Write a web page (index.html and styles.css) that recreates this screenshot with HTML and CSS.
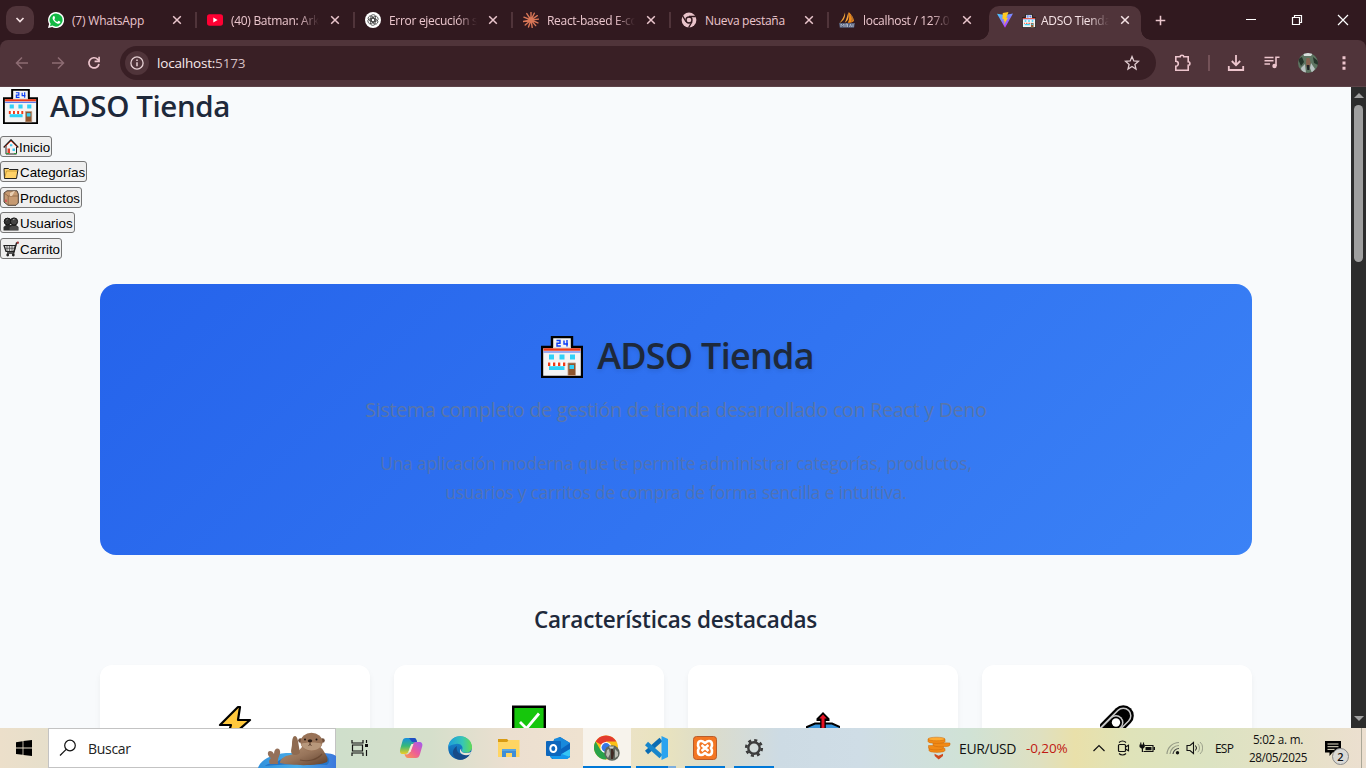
FILE: index.html
```html
<!DOCTYPE html>
<html lang="es">
<head>
<meta charset="utf-8">
<title>ADSO Tienda</title>
<link rel="stylesheet" href="styles.css">
</head>
<body>
<svg class="defs" aria-hidden="true">
  <symbol id="store" viewBox="0 0 42 42">
    <path d="M11 1h20v10h10v30H1V11h10z" fill="#f4f4f4" stroke="#000" stroke-width="2.4"/>
    <path d="M2.500 13.500h37" stroke="#f03a17" stroke-width="2.600"/>
    <path d="M2.500 16h37" stroke="#3f66f0" stroke-width="1.200"/>
    <path d="M12.200 11.700h17.600" stroke="#d8d8d8" stroke-width="1"/>
    <path d="M15.500 4.500h3.500v2.800h-3v2.700h3.800M23 4.500v3.500h4M26 4v6.500" fill="none" stroke="#0a3cf5" stroke-width="1.400"/>
    <path d="M8 18.500h5v5H8zM18.500 18.500h5v5h-5zM29 18.500h5v5h-5zM8 30h15.500v4H8z" fill="#31d2f7"/>
    <path d="M7 28.200h17.500" stroke="#fff" stroke-width="4"/>
    <path d="M7 28.200h17.500" stroke="#f03a17" stroke-width="3.500" stroke-dasharray="2.300 2.700"/>
    <path d="M27 27h7.500v12.500H27z" fill="#8e562e" stroke="#bd9b83" stroke-width=".8"/>
    <path d="M28.500 29h4.500v4h-4.500z" fill="#31d2f7"/>
  </symbol>
  <symbol id="close" viewBox="0 0 10 10"><path d="M1.200 1.200l7.600 7.600M8.800 1.200L1.200 8.800" fill="none" stroke="currentColor" stroke-width="1.500"/></symbol>
</svg>

<div class="screen">
  <header class="tabstrip">
    <button class="tab-search"><svg width="10" height="10" viewBox="0 0 10 10"><path d="M1.500 3L5 6.500 8.500 3" fill="none" stroke="currentColor" stroke-width="1.700"/></svg></button>
    <div class="tabs">
      <div class="tab">
        <svg class="fav" viewBox="0 0 16 16"><path d="M8 0a8 8 0 1 1-3.800 15L0 16l1.100-4A8 8 0 0 1 8 0z" fill="#fff"/><path d="M8 1.400a6.600 6.600 0 1 1-3.500 12.200l-2.500.6.700-2.400A6.600 6.600 0 0 1 8 1.400z" fill="#12b844"/><path d="M5.600 4c-2 1.800-.7 4.200 1.300 6s4.400 2.600 5.400.6c.4-1-.1-1-1.900-1.800L9.300 10C8 9.500 6.800 8.400 6.300 7.200l.8-1.100L6.300 4z" fill="#fff"/></svg>
        <span class="tab-title wide">(7) WhatsApp</span><svg class="x"><use href="#close"/></svg>
      </div>
      <div class="tab">
        <svg class="fav" viewBox="0 0 16 16"><rect y="2.300" width="16" height="11.400" rx="2.600" fill="#ff0033"/><path d="M6.300 5.600v4.800L10.600 8z" fill="#fff"/></svg>
        <span class="tab-title fade">(40) Batman: Ark</span><svg class="x"><use href="#close"/></svg>
      </div>
      <div class="tab">
        <svg class="fav" viewBox="0 0 16 16"><circle cx="8" cy="8" r="8" fill="#fff"/><g fill="none" stroke="#444" stroke-width=".8"><rect x="5.800" y="2.600" width="4.800" height="7.200" rx="2.400"/><rect x="5.800" y="2.600" width="4.800" height="7.200" rx="2.400" transform="rotate(60 8 8)"/><rect x="5.800" y="2.600" width="4.800" height="7.200" rx="2.400" transform="rotate(120 8 8)"/><rect x="5.800" y="2.600" width="4.800" height="7.200" rx="2.400" transform="rotate(180 8 8)"/><rect x="5.800" y="2.600" width="4.800" height="7.200" rx="2.400" transform="rotate(240 8 8)"/><rect x="5.800" y="2.600" width="4.800" height="7.200" rx="2.400" transform="rotate(300 8 8)"/></g></svg>
        <span class="tab-title fade">Error ejecución s</span><svg class="x"><use href="#close"/></svg>
      </div>
      <div class="tab">
        <svg class="fav" viewBox="0 0 16 16"><path d="M8 8V.4M8 8l3.300-6.800M8 8l6.300-4.300M8 8l7.700-.9M8 8l6.900 2.900M8 8l4.700 5.600M8 8l1.200 7.500M8 8l-2.500 7M8 8l-5.800 5M8 8L.3 9.500M8 8L.9 5.200M8 8L3.800 1.600" stroke="#d97757" stroke-width="1.400" stroke-linecap="round"/><circle cx="8" cy="8" r="2.400" fill="#d97757"/></svg>
        <span class="tab-title fade">React-based E-co</span><svg class="x"><use href="#close"/></svg>
      </div>
      <div class="tab">
        <svg class="fav" viewBox="0 0 16 16"><circle cx="8" cy="8" r="7.400" fill="#e9c3ca"/><circle cx="8" cy="8" r="3" fill="#e9c3ca" stroke="#31191f" stroke-width="1.400"/><path d="M8 4.500h6.800M5 9.800L1.600 3.900M11 9.700l-3.400 5.900" stroke="#31191f" stroke-width="1.300"/></svg>
        <span class="tab-title">Nueva pestaña</span><svg class="x"><use href="#close"/></svg>
      </div>
      <div class="tab">
        <svg class="fav" viewBox="0 0 16 16"><path d="M6 .5c.5 4-.5 8-5.500 10.500C3 8 5 4.500 6 .5zM9.500 0c.7 4 .3 8.500-3.700 10.800C7.500 7.500 8 4.500 9.500 0z" fill="#f5a33a"/><path d="M9.800 0c3 3 5 6 5.200 9-1.500 1.300-3.500 1.800-6.300 1.800 2-3 1.500-7 1.100-10.800z" fill="#f28a18"/><path d="M12 3c1.500 2.500 1.600 4.500.5 6.500" stroke="#8c633f" fill="none"/><path d="M0 11h16l-1 4.700H.8z" fill="#56607d"/><path d="M2 15v-3l1.500 1.500L5 12v3M7 15v-3h1.500v3M10.500 15l1-3 1 3M14 12v3" stroke="#b6bccd" stroke-width=".9" fill="none"/></svg>
        <span class="tab-title fade">localhost / 127.0</span><svg class="x"><use href="#close"/></svg>
      </div>
      <div class="tab active">
        <svg class="fav" viewBox="0 0 16 16"><defs><linearGradient id="vite" x1="0" y1="0" x2=".6" y2="1"><stop stop-color="#41d1ff"/><stop offset="1" stop-color="#bd34fe"/></linearGradient></defs><path d="M0 1.700l8 14L16 1.500 8.200 3z" fill="url(#vite)"/><path d="M11.400 0L5.800 1.100 5.400 7.300l1.700-.4-.5 2.400 1.100-.3-.8 4 4.100-7.200-1.700.3z" fill="#ffcb22"/></svg>
        <span class="tab-title fade"><svg class="mini"><use href="#store"/></svg>ADSO Tienda</span><svg class="x"><use href="#close"/></svg>
      </div>
    </div>
    <svg class="plus" viewBox="0 0 12 12"><path d="M6 .8v10.400M.8 6h10.400" stroke="currentColor" stroke-width="1.700"/></svg>
    <div class="win">
      <svg viewBox="0 0 12 12"><path d="M1 5.500h10" stroke="#fff"/></svg>
      <svg viewBox="0 0 12 12"><path d="M1.500 3.500h7v7h-7zM3.500 3.500v-2h7v7h-2" fill="none" stroke="#fff" stroke-width="1.200"/></svg>
      <svg viewBox="0 0 12 12"><path d="M1 1l10 10M11 1L1 11" stroke="#fff" stroke-width="1.200"/></svg>
    </div>
  </header>

  <div class="toolbar">
    <svg class="nav dim" viewBox="0 0 14 14"><path d="M13 7H2M7 1.500L1.500 7 7 12.500" fill="none" stroke="currentColor" stroke-width="1.500"/></svg>
    <svg class="nav dim" viewBox="0 0 14 14"><path d="M1 7h11M7 1.500L12.500 7 7 12.500" fill="none" stroke="currentColor" stroke-width="1.500"/></svg>
    <svg class="nav" viewBox="0 0 14 14"><path d="M12 8a5.100 5.100 0 1 1-1.300-4.700l1.400 1.400" fill="none" stroke="currentColor" stroke-width="1.700"/><path d="M12.900.8v5.400H7.600V4.600h3.700V.8z" fill="currentColor"/></svg>
    <div class="omnibox">
      <span class="info"><svg width="14" height="14" viewBox="0 0 14 14"><circle cx="7" cy="7" r="6.100" fill="none" stroke="#e6d0d4" stroke-width="1.300"/><path d="M7 6.200v4M7 3.500v1.500" stroke="#e6d0d4" stroke-width="1.500"/></svg></span>
      <span class="url">localhost:<em>5173</em></span>
      <svg class="star" viewBox="0 0 16 16"><path d="M8 1.600l1.800 4.300 4.700.4-3.600 3.100 1.100 4.600L8 11.500 4 14l1.100-4.600L1.500 6.300l4.700-.4z" fill="none" stroke="#e0ccd0" stroke-width="1.300"/></svg>
    </div>
    <div class="actions">
      <svg class="a-ext" width="18" height="18" viewBox="0 0 18 18"><path d="M1.800 2.800h4.400a1.800 1.500 0 0 1 3.600 0h4.400v5a1.700 1.700 0 0 1 0 3.400v5H1.800v-4a2.500 2.500 0 0 0 0-5z" fill="none" stroke="currentColor" stroke-width="1.600"/></svg>
      <i class="bar"></i>
      <svg class="a-dl" width="18" height="18" viewBox="0 0 18 18"><path d="M9 1v10M4.800 7L9 11.200 13.200 7M1.800 12v4h14.400v-4" fill="none" stroke="currentColor" stroke-width="1.800"/></svg>
      <svg class="a-media" width="16" height="16" viewBox="0 0 16 16"><path d="M.5 2.500h9M.5 5.700h9M.5 9h5.500M12 11V2.300h3.500" fill="none" stroke="currentColor" stroke-width="1.600"/><circle cx="10.500" cy="11" r="2.200" fill="currentColor"/></svg>
      <svg class="a-user" width="20" height="20" viewBox="0 0 20 20"><clipPath id="av"><circle cx="10" cy="10" r="10"/></clipPath><g clip-path="url(#av)"><path fill="#5d7461" d="M0 0h20v20H0z"/><path fill="#d9dedd" d="M5 0h10l-2 3H6z"/><path fill="#b9c3c2" d="M3 15l4-4 1 9H4zM13 10l4 6-3 4-2-5z"/><path fill="#24352a" d="M0 6l4-2 2 5-3 4zM15 4l5 4v4l-4-2z"/><path fill="#87614f" d="M8.500 5h3l1 5-1 4h-3L8 9z"/><path fill="#202326" d="M8.700 12h2.700v5H9.300z"/></g></svg>
      <svg width="4" height="16" viewBox="0 0 4 16"><path d="M.5 1.200h3v3h-3zM.5 6.500h3v3h-3zM.5 11.800h3v3h-3z" fill="currentColor"/></svg>
    </div>
  </div>

  <div class="viewport">
    <main class="page">
      <h1 class="brand"><svg><use href="#store"/></svg><span>ADSO Tienda</span></h1>
      <ul class="menu">
        <li><button class="w-inicio"><svg viewBox="0 0 16 16"><path d="M3 7v8h10.500V7L8 1.500z" fill="#f4f4f4" stroke="#222"/><path d="M.7 8.500L8 1l7.300 7.500" fill="none" stroke="#222" stroke-width="1.600"/><path d="M1.700 8.300L8 2l6.300 6.300" fill="none" stroke="#e84a30" stroke-width=".8"/><path d="M7 5.300h2.300v2H7zM9.500 9.500h2.500v2.500H9.500z" fill="#40c7ef"/><path d="M4.500 9.500H7v5H4.500z" fill="#e0402b"/><path d="M3 14.500h3M11 14.500h3" stroke="#36a041"/></svg>Inicio</button></li>
        <li><button class="w-cat"><svg viewBox="0 0 16 16"><path d="M1 3.500h4.500l1 1h8.500l-1.500 9H1.500z" fill="#ffd268" stroke="#222"/><path d="M1.800 12.500L3.500 6H14" fill="none" stroke="#b98924" stroke-width=".7"/></svg>Categorías</button></li>
        <li><button class="w-prod"><svg viewBox="0 0 16 16"><path d="M1 3l3-2.200h10L15.300 4v9L13 15.300H5L1 12z" fill="#c69a72" stroke="#4e4038"/><path d="M1.400 3.200L5.200 6v9M5.200 6H15" fill="none" stroke="#8c6444" stroke-width=".8"/><path d="M7 3l4-2 1 0-3 5H7z" fill="#ead0b4"/><path d="M3 9.500v2.500" stroke="#e23a4f" stroke-width="1.300"/></svg>Productos</button></li>
        <li><button class="w-usr"><svg viewBox="0 0 16 16"><path d="M.5 14.500V11L3 9h10l2.500 2v3.500z" fill="#2b2b2b"/><circle cx="4.600" cy="5.500" r="3.400" fill="#333" stroke="#111"/><circle cx="11" cy="5.500" r="3.600" fill="#444" stroke="#111"/><path d="M6.500 14v-2.500L9 10h4l2 1.500V14z" fill="#4b4b4b"/><path d="M3.500 4l1-.7M10 3.800l1.500-.6" stroke="#aaa"/></svg>Usuarios</button></li>
        <li><button class="w-car"><svg viewBox="0 0 16 16"><path d="M1 4.500h11.500l-1.500 6H3z" fill="#d4d4d4" stroke="#222" stroke-width="1.200"/><path d="M15.500 1.500l-2 .5-2.800 10H4" fill="none" stroke="#222" stroke-width="1.400"/><path d="M4 5v5M6.500 5v5M9 5v5M2 7.300h9.500" stroke="#444" stroke-width=".7"/><circle cx="4.700" cy="14" r="1.400" fill="#222"/><circle cx="10.300" cy="14" r="1.400" fill="#222"/><circle cx="14.800" cy="1.700" r="1.100" fill="#a33"/></svg>Carrito</button></li>
      </ul>

      <section class="hero">
        <h2 class="hero-title"><svg><use href="#store"/></svg><span>ADSO Tienda</span></h2>
        <p class="lead">Sistema completo de gestión de tienda desarrollado con React y Deno</p>
        <p class="desc">Una aplicación moderna que te permite administrar categorías, productos,<br>usuarios y carritos de compra de forma sencilla e intuitiva.</p>
      </section>

      <h2 class="section-title">Características destacadas</h2>
      <section class="cards">
        <article class="card"><svg viewBox="0 0 34 40"><path d="M20 2L2 20h11l-5 16L32 15H20L22 2z" fill="#ffc83d" stroke="#000" stroke-width="2.200" stroke-linejoin="round"/></svg></article>
        <article class="card"><svg viewBox="0 0 34 40"><path d="M1.200 1.800h31.600v32H1.200z" fill="#16c60c" stroke="#000" stroke-width="2.400"/><path d="M8 17l6.500 6.500L27 8.500" fill="none" stroke="#fff" stroke-width="2.800"/></svg></article>
        <article class="card"><svg viewBox="0 0 34 40"><path d="M1 22L9 18.500h17l8 3.500v18H1z" fill="#3a96dd" stroke="#000" stroke-width="2"/><path d="M17 7l6.500 6.500V16h-3.700v14h-5.600V16h-3.700v-2.500z" fill="#000"/><path d="M17 9.500l3.700 4h-2.200V30h-3V13.500h-2.200z" fill="#e81224"/></svg></article>
        <article class="card"><svg viewBox="0 0 34 40"><g fill="none" stroke-linecap="round"><path d="M23.300 10.700L1 33" stroke="#000" stroke-width="21"/><path d="M23.300 10.700L1 33" stroke="#c8c8c8" stroke-width="16.500"/><path d="M23.300 10.700L1 33" stroke="#000" stroke-width="13.500"/><path d="M16 17.500L0 33.500" stroke="#c8c8c8" stroke-width="15"/><path d="M16 17.500L0 33.500" stroke="#000" stroke-width="12"/></g><circle cx="16" cy="17.500" r="4.200" fill="#fff"/></svg></article>
      </section>
    </main>
    <aside class="scrollbar"><i class="up"></i><i class="thumb"></i><i class="down"></i></aside>
  </div>

  <footer class="taskbar">
    <div class="start"><svg width="16" height="16" viewBox="0 0 16 16"><path d="M0 2.200L6.600 1.200v6.400H0zM7.400 1.100L16 0v7.600H7.400zM0 8.400h6.600v6.400L0 13.900zM7.400 8.400H16V16l-8.600-1.100z"/></svg></div>
    <div class="search">
      <svg class="lens" viewBox="0 0 18 18"><circle cx="11" cy="6.500" r="5.300" fill="none" stroke="#111" stroke-width="1.200"/><path d="M7.200 10.300L1 16.500" stroke="#111" stroke-width="1.200"/></svg>
      <span>Buscar</span>
      <svg class="otter" viewBox="0 0 78 36"><defs><linearGradient id="fur" x1="0" y1="0" x2="1" y2="1"><stop stop-color="#b59274"/><stop offset=".5" stop-color="#97745a"/><stop offset="1" stop-color="#5f3f2b"/></linearGradient><linearGradient id="ring" x1="0" x2="1"><stop stop-color="#3191dc"/><stop offset=".5" stop-color="#4aaeea"/><stop offset="1" stop-color="#3b78dc"/></linearGradient></defs>
        <path d="M0 36c3-9 14-14 28-15h34c6 0 12 0 16 3v12z" fill="url(#ring)"/>
        <path d="M18 31c-6 0-9 1-11 3 18-2 44-2 62-1 3-3 3-6 0-9-10-4-40-4-51 7z" fill="#2475c8"/>
        <path d="M44 15c8-3 18-2 21 3 3 5 6 9 4 12-8 4-34 4-47 1 0-4 4-7 10-8 5-1 9-4 12-8z" fill="url(#fur)"/>
        <path d="M34 22c-2-3 0-6 0-10 0-5 1-8 3-8s3 4 3.500 8l1.500 9c-2 2-6 3-8 1z" fill="#8f6b51"/>
        <path d="M12 32c-2-3 0-5 1-6-4-2-4-7-1-7 2 0 3 1 4 3 0-6 5-7 6-3 1 4-3 6-2 13z" fill="#94705a"/>
        <circle cx="42.500" cy="8.500" r="2.300" fill="#6f4e3a"/><circle cx="64.500" cy="8.500" r="2.300" fill="#6f4e3a"/><ellipse cx="53.500" cy="10" rx="11" ry="9.300" fill="#987257"/><path d="M43 12c3-2 18-2 21 0-2 8-18 9-21 0z" fill="#b7977b"/><ellipse cx="52" cy="8.800" rx="2.200" ry="1.500" fill="#2c1c14"/><circle cx="47" cy="7.500" r="1" fill="#1c1410"/><circle cx="58.500" cy="7.500" r="1" fill="#1c1410"/><path d="M52 10v2.500l-1.500 1M52 12.500l1.500 1" stroke="#4c3022" fill="none" stroke-width=".9"/><path d="M42 28c8 2 17 0 22-6" stroke="#5c3c28" stroke-width="1.200" fill="none" opacity=".6"/></svg>
    </div>
    <div class="app"><svg width="18" height="16" viewBox="0 0 18 16"><path d="M1 0v3h11V0M1 16v-3h11v3M1.500 5h10v6h-10zM15.500 0v3M15.500 10v6" fill="none" stroke="#111" stroke-width="1.200"/><path d="M14 4h3v3h-3z" fill="#111"/></svg></div>
    <div class="app first"><svg width="24" height="24" viewBox="0 0 24 24"><defs><linearGradient id="cp1" x1="0" y1="0" x2="0" y2="1"><stop stop-color="#168ee0"/><stop offset=".5" stop-color="#36b978"/><stop offset="1" stop-color="#f1cc23"/></linearGradient><linearGradient id="cp2" x1="1" y1="0" x2="0" y2="1"><stop stop-color="#9f5cf2"/><stop offset=".5" stop-color="#ec5c99"/><stop offset="1" stop-color="#fd9b49"/></linearGradient></defs><path d="M7 2h8c2 0 2.500 2 3 4l-4 2c-2 0-3 2-4 6-1 3-2 4-4 4H4c-3 0-3.500-2-2.500-6l2-7C4 3 5 2 7 2z" fill="url(#cp1)"/><path d="M10 2h5c2 0 2.500 2 3 4l-5 0z" fill="#214ec2"/><path d="M17 6h3c3 0 4 2 3 5l-2 7c-1 3-2 4-4 4H9c-2 0-3-2-3.500-4 3 1 5 0 6-3l2-6c.6-2 1.500-3 3.500-3z" fill="url(#cp2)"/><path d="M12.500 8L9.500 16h2l3-8z" fill="#f4ecd4"/></svg></div>
    <div class="app"><svg width="24" height="24" viewBox="0 0 24 24"><defs><linearGradient id="ed1" x1="0" x2="1"><stop stop-color="#1d9ddd"/><stop offset=".6" stop-color="#36c6b5"/><stop offset="1" stop-color="#63dc52"/></linearGradient><linearGradient id="ed2" x1="0" y1="0" x2="0" y2="1"><stop stop-color="#1c91d8"/><stop offset="1" stop-color="#0c59a4"/></linearGradient></defs><circle cx="12" cy="12" r="11.800" fill="url(#ed2)"/><path d="M.3 11C1 4.500 6 .2 12 .2c7 0 12 5 12 10.800 0 3.500-3 5.800-6 5.800-3.500 0-4.500-1.500-4-2.600 2-4-2-7.200-6-6.200C4 8.500 1 10 .3 11z" fill="url(#ed1)"/><path d="M9 10c-2 7 5 11 13 8-3 5-9 7-13 5-5-3-6-9 0-13z" fill="#174b88"/><path d="M13.500 12.500c-2 4 4 6 10 3.500l-1.500 2.500C15 21 9 16 13.500 12.500z" fill="#e9e5d5"/></svg></div>
    <div class="app"><svg width="24" height="24" viewBox="0 0 24 24"><path d="M1 3h9l2 2v5H1z" fill="#d99b12"/><path d="M1 6h9l2-2h10.500v17H1z" fill="#ffd563"/><path d="M5 13h14v8h-4v-4H9v4H5z" fill="#3f8ed7"/><path d="M5 13h14v2H5z" fill="#56a5e5"/></svg></div>
    <div class="app"><svg width="24" height="24" viewBox="0 0 24 24"><path d="M5 6l9-5 10 6v14l-3 2H6l-2-3z" fill="#0a63bd"/><path d="M8 3l6-2 10 6-12 8-4-4z" fill="#1889dc"/><path d="M24 7v13l-3 3H7l17-10z" fill="#35c5f5"/><path d="M5 14l19 7-3 2H7l-3-2z" fill="#1598ec"/><rect y="5" width="15" height="15" rx="1" fill="#0d67bd"/><ellipse cx="7.300" cy="12.500" rx="3" ry="3.500" fill="none" stroke="#fff" stroke-width="2"/></svg></div>
    <div class="app focus u48"><svg width="26" height="26" viewBox="0 0 26 26"><circle cx="12" cy="12.500" r="12" fill="#fbc116"/><path d="M12 12.500L1.600 6.500A12 12 0 0 1 22.400 6.500H12z" fill="#e33b2e"/><path d="M1.600 6.500A12 12 0 0 0 12 24.500l5.200-9L12 12.500l-5.200 3z" fill="#29a34b"/><circle cx="12" cy="12.500" r="5.600" fill="#fff"/><circle cx="12" cy="12.500" r="4.400" fill="#3578e5"/><circle cx="18" cy="18" r="7.700" fill="#5f665c"/><path d="M13 15l2-1 1 5-2 4-2-3zM21 14l3 3v4l-3 2z" fill="#b9bbb2"/><path d="M15 11.500h5l-1 2h-3z" fill="#cfd2cc"/><path d="M17 14h2l1 4-1 6h-2z" fill="#3f2922"/></svg></div>
    <div class="app code"><svg width="24" height="24" viewBox="0 0 24 24"><path d="M2.500 16.500L17 3.500" stroke="#0a6cb3" stroke-width="4.500"/><path d="M2.500 7.500L17 20.500" stroke="#1786cb" stroke-width="4.500"/><path d="M17.500 0L24 3v18l-6.500 3z" fill="#2aa3ef"/></svg></div>
    <div class="app u40"><svg width="24" height="24" viewBox="0 0 24 24"><rect x=".5" y=".5" width="23" height="23" rx="3" fill="#f37623" stroke="#b85c2b"/><path d="M8 5c3 0 3 2 4 2s1-2 4-2 4 4 2 7c2 3 1 7-2 7s-3-2-4-2-1 2-4 2-4-4-2-7c-2-3-1-7 2-7z" fill="none" stroke="#fff" stroke-width="2.600"/><path d="M8.500 9l7 6M15.500 9l-7 6" stroke="#fff" stroke-width="2.500"/></svg></div>
    <div class="app u40"><svg width="20" height="20" viewBox="0 0 20 20"><circle cx="10" cy="10" r="5.700" fill="none" stroke="#3c3c3c" stroke-width="2.400"/><circle cx="10" cy="10" r="7.800" fill="none" stroke="#3c3c3c" stroke-width="2.600" stroke-dasharray="3.060 3.060"/></svg></div>
    <div class="tray">
      <svg class="coins" viewBox="0 0 24 24"><g fill="#f18a16" stroke="#c96708" stroke-width=".5"><path d="M2 12.500v2c0 2.500 16 2.500 16 0v-2z"/><path d="M1.500 9.500V12c0 2.500 15 2.500 15 0V9.500z"/><path d="M6 6.500V9c0 2.500 17 2.500 17 0V7z"/><path d="M1 3v2.500c0 2.500 17 2.500 17 0V3z"/><ellipse cx="9.500" cy="3" rx="8.500" ry="1.800" fill="#ffab32"/></g><path d="M7.500 17.800l4 2 4.500-2v2.200l-4.300 3.600L7.700 20z" fill="#cf4a1e"/></svg>
      <span class="pair">EUR/USD</span><span class="drop">-0,20%</span>
      <svg class="t chev" viewBox="0 0 16 16"><path d="M2.500 11L8 5.500l5.500 5.500" fill="none" stroke="#111" stroke-width="1.200"/></svg>
      <svg class="t cam" viewBox="0 0 16 16"><rect x="2.500" y="4.500" width="7" height="7" rx="1" fill="none" stroke="#111" stroke-width="1.200"/><path d="M9.500 7l3-1.800v5.600l-3-1.800M3 2.500c2-2 5-2 7 0M3 13.500c2 2 5 2 7 0" fill="none" stroke="#111" stroke-width="1.100"/></svg>
      <svg class="t bat" viewBox="0 0 16 16"><path d="M5.500 5.500H14v6H4.500M1.800 2.500v2.500M4.500 2.500v2.500" fill="none" stroke="#111" stroke-width="1.100"/><path d="M6.500 7h6v3.200h-6zM.5 4.500h5.300v2.500L4 8.800V12H2.800V8.800L.5 7zM14.500 7H16v3h-1.500z" fill="#111"/></svg>
      <svg class="t wifi" viewBox="0 0 16 16"><g fill="none" stroke-width="1.200"><path d="M2 14A12 12 0 0 1 14 2.500M5 14a9 9 0 0 1 9-8.500" stroke="#969b86"/><path d="M8 14a6 6 0 0 1 6-5.500" stroke="#444"/></g><circle cx="12.500" cy="12.800" r="1.700" fill="#111"/></svg>
      <svg class="t vol" viewBox="0 0 17 16"><path d="M1 5.500h3L7.500 2.500v11L4 10.500H1z" fill="none" stroke="#111" stroke-width="1.100"/><path d="M9.500 5.500a4 4 0 0 1 0 5" fill="none" stroke="#111"/><path d="M11.800 3.800a6 6 0 0 1 0 8.400M14 2a8 8 0 0 1 0 12" fill="none" stroke="#9ba08b"/></svg>
      <span class="lang">ESP</span>
      <span class="clock"><b class="time">5:02 a. m.</b><b>28/05/2025</b></span>
      <span class="note"><svg width="16" height="15" viewBox="0 0 16 15"><path d="M0 0h16v11.500H7.500L4.500 15v-3.500H0z"/><path d="M2.500 3h11M2.500 5.700h11M2.500 8.400h7" stroke="#e7e0c8"/></svg><i class="badge">2</i></span>
      <i class="desk"></i>
    </div>
  </footer>
</div>
</body>
</html>
```
FILE: styles.css
```css
* { box-sizing: border-box; }
body { margin: 0; font-family: "Open Sans", "Noto Sans", sans-serif; }
h1, h2, p, ul { margin: 0; padding: 0; }
svg { display: block; flex: none; }
.defs { position: absolute; width: 0; height: 0; }
.screen { width: 1366px; height: 768px; display: grid; grid-template-rows: 40px 47px 641px 40px; overflow: hidden; background: #31191f; }

/* tab strip */
.tabstrip { display: flex; align-items: center; background: #31191f; color: #ebc6cd; }
.tab-search { width: 28px; height: 28px; margin-left: 6px; padding: 0; border: 0; border-radius: 10px; background: #50343a; color: #f3dfe2; display: flex; align-items: center; justify-content: center; }
.tabs { display: flex; height: 40px; margin-left: 4px; }
.tab { width: 158px; height: 40px; padding: 0 15px 0 10px; display: flex; align-items: center; position: relative; font-size: 12px; }
.tab:not(.active):not(:nth-child(6))::after { content: ""; position: absolute; right: -1px; top: 12px; width: 2px; height: 16px; background: #50343a; }
.tab + .tab:not(.active) { padding-left: 11px; }
.fav { width: 16px; height: 16px; margin-right: 8px; }
.tab-title { width: 88px; line-height: 20px; padding-top: 1px; white-space: nowrap; letter-spacing: -.3px; display: flex; align-items: center; }
.wide { letter-spacing: -.2px; }
.fade { -webkit-mask-image: linear-gradient(90deg, #000 68px, transparent 88px); mask-image: linear-gradient(90deg, #000 68px, transparent 88px); }
.x { width: 10px; height: 10px; margin-left: auto; }
.tab .x { margin-right: -1px; }
.active { width: 152px; margin-left: 3px; height: 34px; align-self: flex-end; padding: 0 12px 6px 8px; background: #50343a; border-radius: 10px 10px 0 0; color: #f6e3e6; }
.active::before, .active::after { content: ""; position: absolute; bottom: 0; width: 10px; height: 10px; }
.active::before { left: -10px; background: radial-gradient(circle at 0 0, transparent 9.500px, #50343a 10px); }
.active::after { right: -10px; background: radial-gradient(circle at 100% 0, transparent 9.500px, #50343a 10px); }
.mini { width: 14px; height: 14px; margin: 0 5px 0 1px; }
.plus { width: 11px; height: 11px; margin-left: 14px; }
.win { display: flex; gap: 34px; margin-left: auto; margin-right: 17px; }
.win svg { width: 12px; height: 12px; }

/* toolbar */
.toolbar { display: flex; align-items: center; padding: 0 20px 1px 15px; background: #50343a; border-bottom: 1px solid #5d4348; border-radius: 8px 8px 0 0; color: #edc5cd; }
.nav { width: 14px; height: 14px; margin-right: 22px; }
.dim { color: #8d6c73; }
.omnibox { width: 1036px; height: 34px; margin-left: -3px; padding: 0 16px 0 5px; border-radius: 17px; background: #391f25; display: flex; align-items: center; }
.info { width: 24px; height: 24px; border-radius: 50%; background: #50343a; display: flex; align-items: center; justify-content: center; }
.url { margin-left: 8px; font-size: 13.500px; letter-spacing: -.2px; color: #f8e9eb; }
.url em { font-style: normal; color: #d6bfc3; }
.star { width: 16px; height: 16px; margin-left: auto; }
.actions { flex: 1; display: flex; align-items: center; padding-left: 18px; }
.a-ext { margin-right: 16px; }
.bar { width: 2px; height: 16px; margin-right: 17px; background: #745258; }
.a-dl { margin-right: 19px; }
.a-media { margin-right: 18px; }
.a-user { margin-right: 24px; }

/* web page */
.viewport { display: grid; grid-template-columns: 1351px 15px; overflow: hidden; }
.page { background: #f8fafc; color: #1e293b; overflow: hidden; }
.brand { display: flex; height: 48.600px; padding-top: 2px; font-size: 29.500px; font-weight: 570; line-height: 34px; }
.brand svg { width: 35px; height: 35px; margin: 0 12px 0 3px; }
.brand span { letter-spacing: -.4px; }
.menu { list-style: none; height: 148.400px; }
.menu li { height: 25.600px; }
.menu button { display: flex; align-items: center; height: 21px; padding: 3px 1px 1px 2px; border: 1px solid #767676; border-radius: 3px; background: #efefef; color: #000; font: 13.333px "Liberation Sans", Arial, sans-serif; white-space: nowrap; }
.menu svg { width: 16px; height: 16px; margin-right: 1px; }
.menu .w-inicio svg { margin-right: 0; }
.w-inicio { width: 52px; } .w-cat { width: 87px; } .w-prod { width: 82px; } .w-usr { width: 75px; } .w-car { width: 62px; }
.hero { width: 1152px; height: 271px; margin: 0 0 0 100px; padding-top: 47px; border-radius: 16px; background: linear-gradient(135deg, #2563eb, #3b82f6); text-align: center; }
.hero-title { display: flex; justify-content: center; align-items: center; height: 50px; padding-left: 3px; font-size: 36px; font-weight: 570; letter-spacing: -.75px; text-shadow: 0 2px 4px rgba(0, 0, 0, .1); }
.hero-title svg { width: 42px; height: 42px; margin: 2px 14px 0 0; }
.lead { height: 56px; padding-top: 13px; line-height: 32px; font-size: 19.500px; letter-spacing: -.19px; color: #5a76a8; white-space: nowrap; }
.desc { margin-top: 13px; line-height: 28.800px; font-size: 17.300px; letter-spacing: -.13px; color: #5173b4; white-space: nowrap; }
.section-title { margin-top: 47px; height: 63px; line-height: 36px; font-size: 22.500px; font-weight: 570; letter-spacing: -.2px; text-align: center; }
.cards { display: grid; grid-template-columns: repeat(4, 270px); gap: 24px; padding-left: 100px; }
.card { height: 200px; padding-top: 40px; background: #fff; border-radius: 12px; box-shadow: 0 4px 6px rgba(0, 0, 0, .05); display: flex; justify-content: center; }
.card svg { width: 34px; height: 40px; }
.scrollbar { background: #2c2c2c; display: flex; flex-direction: column; align-items: center; }
.up { margin-top: 6px; border: 5px solid transparent; border-top: 0; border-bottom: 5px solid #a0a0a0; }
.thumb { width: 9px; height: 157px; margin-top: 7px; border-radius: 5px; background: #9f9f9f; }
.down { margin: auto 0 7px; border: 5px solid transparent; border-bottom: 0; border-top: 5px solid #a0a0a0; }

/* taskbar */
.taskbar { display: flex; background: linear-gradient(90deg, #ecdfca 0, #e6dfcb 50px, #cfdfcb 340px, #d5dfcb 430px, #ecdfd0 510px, #efe2d0 580px, #e9e3be 665px, #dcdccb 710px, #cddbe4 780px, #cfdde6 860px, #d0e2d5 970px, #dfe0c0 1040px, #e9e0aa 1075px, #dfe3b9 1130px, #dce3c2 1210px, #e5e1c5 1290px, #ecdfd0 1366px); }
.start { width: 48px; display: flex; align-items: center; justify-content: center; }
.search { width: 288px; border: 1px solid #c3c3c3; background: #fff; display: flex; align-items: center; padding-left: 10px; font-size: 14px; letter-spacing: -.3px; color: #222; }
.lens { width: 18px; height: 18px; margin-right: 11px; }
.search span { line-height: 38px; padding-top: 1px; }
.otter { width: 78px; height: 36px; margin: 3px -1px 0 auto; }
.app { width: 48px; margin-right: 1px; display: flex; align-items: center; justify-content: center; position: relative; }
.app.first { margin-left: 2px; }
.focus { background: #f7f3ec; }
.u48::after, .u40::after, .code::after { content: ""; position: absolute; bottom: 0; left: 0; width: 48px; height: 2px; background: #0078d7; }
.u40::after { left: 4px; width: 40px; }
.code::after { left: 4px; width: 40px; background: linear-gradient(90deg, #0078d7 32px, #7caede 32px); }
.tray { flex: 1; display: flex; align-items: center; justify-content: flex-end; font-size: 12px; color: #111; letter-spacing: -.3px; white-space: nowrap; }
.coins { width: 24px; height: 24px; margin-right: 8px; }
.pair { width: 67px; font-size: 14px; letter-spacing: -.4px; }
.drop { width: 65px; font-size: 13.500px; letter-spacing: -.1px; color: #c01a12; }
.t { width: 16px; height: 16px; }
.chev { margin-right: 9px; }
.cam { margin-right: 7px; }
.bat { margin-right: 10px; }
.wifi { margin-right: 5px; }
.vol { width: 17px; margin-right: 12px; }
.lang { width: 18px; margin-right: 14px; font-size: 12px; letter-spacing: -.8px; }
.clock { width: 62px; text-align: center; }
.clock b { display: block; font-weight: 400; font-size: 11.700px; line-height: 18px; letter-spacing: -.4px; }
.clock .time { letter-spacing: -.25px; }
.note { width: 16px; height: 15px; margin: 0 20px 0 16px; position: relative; }
.badge { position: absolute; left: 7px; top: 7px; width: 17px; height: 17px; border: 1px solid #888; border-radius: 50%; background: #d9d9d6; font: 600 11px/15px "Open Sans", sans-serif; text-align: center; letter-spacing: 0; }
.desk { width: 1px; height: 40px; margin-right: 4px; background: #aaa798; }
```
